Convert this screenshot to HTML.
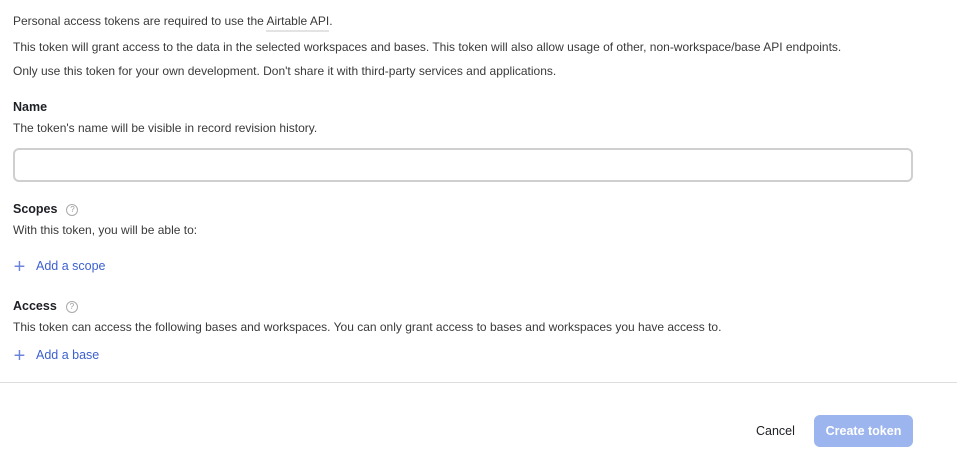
<!DOCTYPE html>
<html><head><style>
body{margin:0;width:957px;height:459px;background:#fff;font-family:"Liberation Sans",sans-serif;font-size:12px;color:#3a3a3a;position:relative;overflow:hidden}
.t{position:absolute;left:13px;white-space:nowrap;line-height:16px}
.b{font-weight:bold;color:#1d1f25;font-size:12.5px}
.q{display:inline-block;width:10px;height:10px;border:1px solid #aaa;border-radius:50%;font-size:8px;line-height:10px;text-align:center;color:#999;margin-left:9px;vertical-align:1px;font-weight:normal}
.add{color:#3c5fd1;font-size:12.5px}
.add span{display:inline-block;width:13px;font-size:20px;font-weight:normal;color:#6b85dd;margin-right:10px;vertical-align:-3px;text-align:center}
</style></head><body>
<div class="t" style="top:13px">Personal access tokens are required to use the <span style="border-bottom:2px solid #e3e3e3;padding-bottom:2px">Airtable API</span>.</div>
<div class="t" style="top:39px">This token will grant access to the data in the selected workspaces and bases. This token will also allow usage of other, non-workspace/base API endpoints.</div>
<div class="t" style="top:63px">Only use this token for your own development. Don't share it with third-party services and applications.</div>
<div class="t b" style="top:99px">Name</div>
<div class="t" style="top:120px">The token's name will be visible in record revision history.</div>
<div style="position:absolute;left:13px;top:148px;width:896px;height:30px;border:2px solid #cfcfcf;border-radius:6px"></div>
<div class="t b" style="top:201px">Scopes<span class="q">?</span></div>
<div class="t" style="top:222px">With this token, you will be able to:</div>
<div class="t add" style="top:258px"><span>+</span>Add a scope</div>
<div class="t b" style="top:298px">Access<span class="q">?</span></div>
<div class="t" style="top:319px">This token can access the following bases and workspaces. You can only grant access to bases and workspaces you have access to.</div>
<div class="t add" style="top:347px"><span>+</span>Add a base</div>
<div style="position:absolute;left:0;top:382px;width:957px;height:1px;background:#ddd"></div>
<div style="position:absolute;left:756px;top:423px;color:#1d1f25;line-height:16px;font-size:12.5px">Cancel</div>
<div style="position:absolute;left:814px;top:415px;width:99px;height:32px;background:#9cb5ee;border-radius:6px;color:#fff;font-weight:bold;text-align:center;line-height:32px;font-size:12.5px">Create token</div>
</body></html>
